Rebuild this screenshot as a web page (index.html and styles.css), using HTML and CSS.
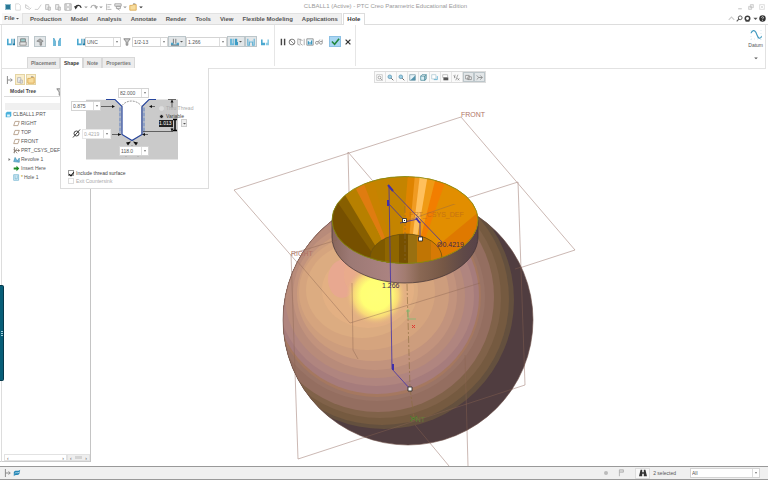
FILE: index.html
```html
<!DOCTYPE html>
<html lang="en">
<head>
<meta charset="utf-8">
<title>CLBALL1 (Active) - PTC Creo Parametric Educational Edition</title>
<link rel="stylesheet" href="styles.css">
</head>
<body>
<svg class="defs" aria-hidden="true">
  <symbol id="i-page" viewBox="0 0 10 10"><path d="M2 1h4l2 2v6H2z" fill="#fff" stroke="#d4d4d4"/></symbol>
  <symbol id="i-open" viewBox="0 0 10 10"><path d="M2 2l5 4M2 2v4l5 2 2-2" fill="none" stroke="#c0c0c0"/></symbol>
  <symbol id="i-pen" viewBox="0 0 10 10"><path d="M1 8h4l4-6" fill="none" stroke="#c4c4c4"/></symbol>
  <symbol id="i-copy" viewBox="0 0 10 10"><path d="M2 2h4v6H2zM5 5h3v4H5z" fill="#eee" stroke="#b4b4b4"/></symbol>
  <symbol id="i-disk" viewBox="0 0 10 10"><path d="M1 1h8v8H1z" fill="#ddd" stroke="#aaa"/><path d="M3 1h4v3H3zM3 6h4v3H3z" fill="#fff" stroke="#aaa" stroke-width=".6"/></symbol>
  <symbol id="i-undo" viewBox="0 0 10 10"><path d="M2 5c1-3 6-3 7 1" fill="none" stroke="currentColor" stroke-width="1.6"/><path d="M0 4l5 0-3 4z" fill="currentColor"/></symbol>
  <symbol id="i-redo" viewBox="0 0 10 10"><path d="M8 5c-1-3-6-3-7 1" fill="none" stroke="#aaa" stroke-width="1.4"/><path d="M10 4H5l3 4z" fill="#aaa"/></symbol>
  <symbol id="i-regen" viewBox="0 0 10 10"><path d="M3 2h5M3 8h5M3 5h3M2 1v8" fill="none" stroke="#aaa"/></symbol>
  <symbol id="i-win" viewBox="0 0 10 10"><path d="M1 1h8v3H1zM3 4h5v3H3zM4 7l3 2" fill="#eee" stroke="#999"/></symbol>
  <symbol id="i-folder" viewBox="0 0 10 10"><path d="M1 3h3l1-1h4v7H1z" fill="#f7dc9c" stroke="#d9a548"/><path d="M5 1h3" stroke="#888"/></symbol>
  <symbol id="i-u" viewBox="0 0 10 10"><path d="M0 1h2v6h3V1h1v8H0z" fill="#4ba8d0"/><path d="M7 1h1v6h1V1h1v8H7z" fill="#1e7aa4"/></symbol>
  <symbol id="i-u2" viewBox="0 0 10 10"><path d="M0 1h3v6h1V1h1v8H0z" fill="#6bb8da"/><path d="M6 1h3v4h1v4H6z" fill="#3d9bc4"/></symbol>
  <symbol id="i-stack" viewBox="0 0 10 10"><path d="M2 1h6v4H2z" fill="#9cc" stroke="#777"/><path d="M1 5h8v4H1z" fill="#e4e4e4" stroke="#888"/></symbol>
  <symbol id="i-bolt" viewBox="0 0 10 10"><path d="M1 4l4-3 4 3-2 1v4H5V5z" fill="#aaa" stroke="#777" stroke-width=".8"/></symbol>
  <symbol id="i-v" viewBox="0 0 10 10"><path d="M0 0h1l2 4v6H0z" fill="#74bddd"/><path d="M10 0H9L7 4v6h3z" fill="#74bddd"/><path d="M1 0l2 4v6M9 0L7 4v6" fill="none" stroke="#3a92ba" stroke-width=".8"/></symbol>
  <symbol id="i-filter" viewBox="0 0 10 10"><path d="M1 1h8L6 5v4H4V5z" fill="#ccc" stroke="#777"/></symbol>
  <symbol id="i-depth" viewBox="0 0 10 10"><path d="M0 6h3v2h4V6h3v3H0z" fill="#4ba8d0"/><path d="M3 1v6M6 1v6M0 9h10" stroke="#666"/></symbol>
  <symbol id="i-sink" viewBox="0 0 10 10"><path d="M1 1v8h2V5h4v4h2V1" fill="none" stroke="#62b1d4" stroke-width="1.4"/><path d="M3 3l2 2 2-2" fill="none" stroke="#a4d3e8"/></symbol>
  <symbol id="i-bore" viewBox="0 0 10 10"><path d="M0 2h2v4h3v3H0z" fill="#4ba8d0"/><path d="M10 2H8v4H6v3h4z" fill="#8dcbe4"/></symbol>
  <symbol id="i-pause" viewBox="0 0 10 10"><path d="M3 1v8M7 1v8" stroke="#444" stroke-width="1.8"/></symbol>
  <symbol id="i-no" viewBox="0 0 10 10"><circle cx="5" cy="5" r="3.6" fill="none" stroke="#777" stroke-width="1.2"/><path d="M2.5 2.5l5 5" stroke="#777"/></symbol>
  <symbol id="i-layers" viewBox="0 0 10 10"><path d="M1 1v7l3 1M4 1v6l3 2M9 1v8M1 1l6 2" fill="none" stroke="#999"/></symbol>
  <symbol id="i-prev" viewBox="0 0 10 10"><path d="M1 1h8v8H1z" fill="#e5f3f9" stroke="#888"/><path d="M3 4v4M5 5v3M7 3v5" stroke="#3695be" stroke-width="1.4"/></symbol>
  <symbol id="i-glasses" viewBox="0 0 10 10"><circle cx="2.4" cy="6" r="1.8" fill="none" stroke="#888"/><circle cx="7.4" cy="6" r="1.8" fill="none" stroke="#888"/><path d="M4 5l2-3M9 5V2" stroke="#888"/></symbol>
  <symbol id="i-check" viewBox="0 0 10 10"><path d="M1 5l3 3 5-6" fill="none" stroke="#23873e" stroke-width="1.8"/></symbol>
  <symbol id="i-x" viewBox="0 0 10 10"><path d="M2 2l6 6M8 2L2 8" stroke="#333" stroke-width="1.6"/></symbol>
  <symbol id="i-caret" viewBox="0 0 10 10"><path d="M2 4h6L5 7z" fill="currentColor"/></symbol>
  <symbol id="i-zoom" viewBox="0 0 10 10"><circle cx="6" cy="4" r="2.7" fill="none" stroke="currentColor" stroke-width="1.4"/><path d="M4 6L1 9" stroke="currentColor" stroke-width="1.6"/></symbol>
  <symbol id="i-mag" viewBox="0 0 10 10"><circle cx="4" cy="4" r="2.6" fill="#9fd0e6" stroke="#528eab"/><path d="M6 6l3 3" stroke="#666" stroke-width="1.4"/></symbol>
  <symbol id="i-gear" viewBox="0 0 10 10"><circle cx="5" cy="5" r="3.2" fill="none" stroke="#3c3c3c" stroke-width="2.2"/><path d="M2 9h6" stroke="#555"/></symbol>
  <symbol id="i-help" viewBox="0 0 10 10"><circle cx="5" cy="5" r="4.6" fill="#333"/><path d="M3.6 3.8c0-2 3-1.8 2.8 0C6.2 5 5 4.8 5 6M5 7v1.2" fill="none" stroke="#fff"/></symbol>
  <symbol id="i-fit" viewBox="0 0 10 10"><path d="M1 1h8v8H1z" fill="#fff" stroke="#bbb"/><circle cx="5" cy="5" r="2" fill="none" stroke="#888"/><path d="M6 6l3 3" stroke="#888"/></symbol>
  <symbol id="i-repaint" viewBox="0 0 10 10"><path d="M1 1h8v8H1z" fill="#e6f3f8" stroke="#7797a5"/><path d="M9 2v7H2z" fill="#5393ad"/></symbol>
  <symbol id="i-cube" viewBox="0 0 10 10"><path d="M1 3h6v6H1z" fill="#dceff5" stroke="#397f92"/><path d="M1 3l2-2h6v6L7 9V3l2-2" fill="none" stroke="#397f92"/></symbol>
  <symbol id="i-views" viewBox="0 0 10 10"><path d="M1 1h6v6H1z" fill="#fff" stroke="#a8c4d0"/><path d="M4 8h5V3" fill="none" stroke="#3fa0c8"/></symbol>
  <symbol id="i-cam" viewBox="0 0 10 10"><path d="M1 1h7v4H1z" fill="#fff" stroke="#aaa"/><path d="M2 5h7v4H2z" fill="#555"/></symbol>
  <symbol id="i-axes" viewBox="0 0 10 10"><path d="M1 2l2 3M7 1L4 9M6 6l3 3M9 6L7 9M3 1L2 6" stroke="#777" stroke-width=".9"/></symbol>
  <symbol id="i-note" viewBox="0 0 10 10"><path d="M1 2h5v5H1zM4 4h5v4H4z" fill="#fff" stroke="#777"/></symbol>
  <symbol id="i-spin" viewBox="0 0 10 10"><path d="M1 2l3 3-3 3M4 5h5M6 2l3 3-3 3" fill="none" stroke="#777"/></symbol>
  <symbol id="i-tree" viewBox="0 0 10 10"><path d="M3 0v10M3 5h6M7 3l2 2-2 2" fill="none" stroke="#888" stroke-width="1.2"/></symbol>
  <symbol id="i-part" viewBox="0 0 10 10"><path d="M1 3l2-2h6v6L7 9H1z" fill="#4cb2dc"/><path d="M3 5h4v3H3z" fill="#e4f5fb"/></symbol>
  <symbol id="i-plane" viewBox="0 0 10 10"><path d="M1 8l2-6h6L7 8z" fill="none" stroke="#a08468"/></symbol>
  <symbol id="i-csys" viewBox="0 0 10 10"><path d="M2 0v9M1 3l5 6M6 2L1 8M4 5h6M8 3v4" fill="none" stroke="#77685c"/></symbol>
  <symbol id="i-revolve" viewBox="0 0 10 10"><path d="M1 8l2-6 3 5 3-4v6z" fill="#6bb8da" stroke="#327fa4" stroke-width=".8"/></symbol>
  <symbol id="i-insert" viewBox="0 0 10 10"><path d="M1 3.5h4V1l4 4-4 4V6.5H1z" fill="#1c8a25"/></symbol>
  <symbol id="i-hole" viewBox="0 0 10 10"><path d="M1 1h7v8H1z" fill="#e6f4fa" stroke="#67afcd"/><path d="M3 2v5h3V2" fill="none" stroke="#67afcd"/></symbol>
  <symbol id="i-globe" viewBox="0 0 10 10"><path d="M1 4c2-4 5 0 8-3l-1 5c-2 3-5 0-7 3z" fill="#2686b5"/><path d="M2 6c2-3 3 0 6-2" fill="none" stroke="#bfe4f3"/></symbol>
  <symbol id="i-find" viewBox="0 0 10 10"><path d="M2 1h2v3h2V1h2l2 8H6V6H4v3H0z" fill="#333"/></symbol>
  <symbol id="i-flag" viewBox="0 0 10 10"><path d="M3 9V1h5v3H3" fill="#ddd" stroke="#aaa"/></symbol>
  <symbol id="i-curve" viewBox="0 0 12 12"><path d="M1 4C4-1 6 3 7 6s3 5 5 1" fill="none" stroke="#3d97bd" stroke-width="1.1"/><path d="M1 10h10M1 1v10M11 1v10" stroke="#b9dcea" stroke-width=".6" stroke-dasharray="1 2"/></symbol>
</svg>

<header class="titlebar">
  <nav class="quick" aria-label="Quick access">
    <span class="app-mark"></span>
    <button aria-label="New"><svg><use href="#i-page"/></svg></button>
    <button aria-label="Open"><svg><use href="#i-open"/></svg></button>
    <button aria-label="Edit"><svg><use href="#i-pen"/></svg></button>
    <button aria-label="Copy"><svg><use href="#i-copy"/></svg></button>
    <button aria-label="Paste"><svg><use href="#i-copy"/></svg></button>
    <button aria-label="Save"><svg><use href="#i-disk"/></svg></button>
    <button class="dark" aria-label="Undo"><svg><use href="#i-undo"/></svg></button>
    <button class="thin" aria-label="Undo list"><svg><use href="#i-caret"/></svg></button>
    <button class="slim" aria-label="Redo"><svg><use href="#i-redo"/></svg></button>
    <button class="thin" aria-label="Redo list"><svg><use href="#i-caret"/></svg></button>
    <button class="slim" aria-label="Regenerate"><svg><use href="#i-regen"/></svg></button>
    <button class="slim" aria-label="Windows"><svg><use href="#i-win"/></svg></button>
    <button class="thin" aria-label="Window list"><svg><use href="#i-caret"/></svg></button>
    <button aria-label="Close window"><svg><use href="#i-folder"/></svg></button>
    <button class="thin dark" aria-label="Customize"><svg><use href="#i-caret"/></svg></button>
  </nav>
  <h1>CLBALL1 (Active) - PTC Creo Parametric Educational Edition</h1>
  <div class="window-buttons">
    <button aria-label="Minimize"><svg viewBox="0 0 10 10"><path d="M2 8h6" stroke="#bbb" stroke-width="1.5"/></svg></button>
    <button aria-label="Restore"><svg viewBox="0 0 10 10"><path d="M1 4h5v5H1zM4 1h5v5H4z" fill="#eee" stroke="#bbb"/></svg></button>
    <button aria-label="Close"><svg viewBox="0 0 10 10"><path d="M1 1h8v8H1zM3 3l4 4M7 3L3 7" fill="none" stroke="#ccc"/></svg></button>
  </div>
</header>

<nav class="tabs">
  <button class="file">File<svg><use href="#i-caret"/></svg></button>
  <div class="tab-list">
    <button>Production</button><button>Model</button><button>Analysis</button><button>Annotate</button><button>Render</button><button>Tools</button><button>View</button><button>Flexible Modeling</button><button>Applications</button>
  </div>
  <button class="active">Hole</button>
  <div class="help-buttons">
    <button aria-label="Collapse"><svg viewBox="0 0 10 10"><path d="M1 7l4-4 4 4" fill="none" stroke="#ccc" stroke-width="1.5"/></svg></button>
    <button aria-label="Search"><svg><use href="#i-zoom"/></svg></button>
    <button aria-label="Settings"><svg><use href="#i-gear"/></svg></button>
    <button class="thin" aria-label="Settings list"><svg><use href="#i-caret"/></svg></button>
    <button aria-label="Help"><svg><use href="#i-help"/></svg></button>
  </div>
</nav>

<section class="ribbon">
  <div class="dashboard">
    <div class="tools">
      <button aria-label="Simple hole"><svg><use href="#i-u"/></svg></button>
      <button class="on" aria-label="Standard hole"><svg><use href="#i-stack"/></svg></button>
      <button class="on spaced" aria-label="Tapping"><svg><use href="#i-bolt"/></svg></button>
      <button class="spaced" aria-label="Tapered"><svg><use href="#i-v"/></svg></button>
      <span class="series"><svg><use href="#i-u"/></svg></span>
      <span class="combo w-m"><select aria-label="Thread series"><option>UNC</option></select></span>
      <span class="lead"><svg><use href="#i-filter"/></svg></span>
      <span class="combo w-m"><select aria-label="Screw size"><option>1/2-13</option></select></span>
      <button class="on split" aria-label="Depth type"><svg><use href="#i-depth"/></svg><svg class="arrow"><use href="#i-caret"/></svg></button>
      <span class="combo w-l"><select aria-label="Depth"><option>1.266</option></select></span>
      <button class="on split" aria-label="Depth side"><svg><use href="#i-u2"/></svg><svg class="arrow"><use href="#i-caret"/></svg></button>
      <button class="on" aria-label="Countersink"><svg><use href="#i-sink"/></svg></button>
      <button class="last" aria-label="Counterbore"><svg><use href="#i-bore"/></svg></button>
    </div>
    <div class="confirm">
      <button aria-label="Pause"><svg><use href="#i-pause"/></svg></button>
      <button aria-label="No preview"><svg><use href="#i-no"/></svg></button>
      <button aria-label="Unattached"><svg><use href="#i-layers"/></svg></button>
      <button aria-label="Attached"><svg><use href="#i-prev"/></svg></button>
      <button aria-label="Verify"><svg><use href="#i-glasses"/></svg></button>
      <button class="accept" aria-label="Accept"><svg><use href="#i-check"/></svg></button>
      <button aria-label="Cancel"><svg><use href="#i-x"/></svg></button>
    </div>
    <button class="datum"><svg><use href="#i-curve"/></svg>Datum<svg class="arrow"><use href="#i-caret"/></svg></button>
  </div>
  <div class="subtabs">
    <button>Placement</button><button class="active">Shape</button><button>Note</button><button>Properties</button>
  </div>
</section>

<main>
  <aside class="tree-panel">
    <div class="tree-tabs">
      <button aria-label="Model tree"><svg><use href="#i-tree"/></svg></button>
      <button class="tan" aria-label="Folders"><svg><use href="#i-copy"/></svg></button>
      <button class="tan" aria-label="Favorites"><svg><use href="#i-folder"/></svg></button>
    </div>
    <h2>Model Tree<svg><use href="#i-filter"/></svg></h2>
    <div class="tree-head"></div>
    <ul class="tree">
      <li class="root"><svg><use href="#i-part"/></svg>CLBALL1.PRT</li>
      <li><svg><use href="#i-plane"/></svg>RIGHT</li>
      <li><svg><use href="#i-plane"/></svg>TOP</li>
      <li><svg><use href="#i-plane"/></svg>FRONT</li>
      <li><svg><use href="#i-csys"/></svg>PRT_CSYS_DEF</li>
      <li class="parent"><svg class="twist" viewBox="0 0 10 10"><path d="M3 2l4 3-4 3z" fill="#777"/></svg><svg><use href="#i-revolve"/></svg>Revolve 1</li>
      <li><svg><use href="#i-insert"/></svg>Insert Here</li>
      <li><svg><use href="#i-hole"/></svg><span class="star">*</span>Hole 1</li>
    </ul>
    <div class="scrolls">
      <div class="scroll"><span>‹</span><span>›</span></div>
      <div class="scroll short"><span>‹</span><i></i><span>›</span></div>
    </div>
    <button class="drawer" aria-label="Open drawer"><span></span></button>
  </aside>

  <section class="canvas">
    <div class="view-tools">
      <button aria-label="Refit"><svg><use href="#i-fit"/></svg></button>
      <button aria-label="Zoom in"><svg><use href="#i-mag"/></svg></button>
      <button aria-label="Zoom out"><svg><use href="#i-mag"/></svg></button>
      <button aria-label="Repaint"><svg><use href="#i-repaint"/></svg></button>
      <button aria-label="Display style"><svg><use href="#i-cube"/></svg></button>
      <button aria-label="Saved views"><svg><use href="#i-views"/></svg></button>
      <button aria-label="View manager"><svg><use href="#i-cam"/></svg></button>
      <button aria-label="Datum display"><svg><use href="#i-axes"/></svg></button>
      <button class="on" aria-label="Annotations"><svg><use href="#i-note"/></svg></button>
      <button class="on" aria-label="Spin center"><svg><use href="#i-spin"/></svg></button>
    </div>
    <svg class="model" viewBox="91 69 677 397" preserveAspectRatio="xMidYMid meet">
      <defs>
        <clipPath id="ball"><circle cx="408" cy="320" r="125"/></clipPath>
        <clipPath id="rim"><ellipse cx="405" cy="220" rx="73" ry="43.5"/></clipPath>
        <clipPath id="bore"><ellipse cx="406" cy="258" rx="36" ry="24"/></clipPath>
        <radialGradient id="glow"><stop offset="0" stop-color="#ffff78"/><stop offset=".5" stop-color="#ffff74"/><stop offset=".75" stop-color="#f8d878"/><stop offset="1" stop-color="#e4b483" stop-opacity="0"/></radialGradient>
        <linearGradient id="wall"><stop offset="0" stop-color="#88665c"/><stop offset=".12" stop-color="#9c7974"/><stop offset=".42" stop-color="#ac8482"/><stop offset=".5" stop-color="#a27c70"/><stop offset=".6" stop-color="#8a6854"/><stop offset=".76" stop-color="#765846"/><stop offset=".9" stop-color="#5f4947"/><stop offset="1" stop-color="#584248"/></linearGradient>
      </defs>
      <g class="plane">
        <path d="M350 323L234 190 461 117 575 250 350 323"/>
        <path d="M291 254L518 182 525 385 298 459z"/>
        <path d="M348 152L353 350M348 152L378 187M415 425L449 466M465 355L468 466"/>
      </g>
      <g clip-path="url(#ball)">
        <circle cx="408" cy="320" r="126" fill="#503d40"/>
        <ellipse cx="384" cy="300" rx="130" ry="129" fill="#64503e"/>
        <ellipse cx="382" cy="299" rx="127" ry="126" fill="#755a40"/>
        <ellipse cx="380" cy="298" rx="121" ry="120" fill="#806249"/>
        <ellipse cx="378" cy="297" rx="116" ry="115" fill="#946e60"/>
        <ellipse cx="377" cy="297" rx="108" ry="104" fill="#9a7466"/>
        <ellipse cx="377" cy="296" rx="104" ry="101" fill="#a57860"/>
        <ellipse cx="377" cy="296" rx="102" ry="98" fill="#a67c7c"/>
        <ellipse cx="376" cy="296" rx="98" ry="90" fill="#b0857f"/>
        <ellipse cx="375" cy="296" rx="90" ry="82" fill="#b88b7a"/>
        <ellipse cx="375" cy="295" rx="82" ry="75" fill="#c2937d"/>
        <ellipse cx="373" cy="294" rx="76" ry="67" fill="#cd9d7d"/>
        <ellipse cx="367" cy="292" rx="68" ry="58" fill="#d5a47e"/>
        <ellipse cx="362" cy="290" rx="56" ry="48" fill="#dcac81"/>
        <ellipse cx="368" cy="290" rx="46" ry="38" fill="#e3b083"/>
        <ellipse cx="342" cy="279" rx="14" ry="19" fill="#e9a694" opacity=".75"/>
        <ellipse cx="355" cy="275" rx="11" ry="17" fill="#e9ac8a" opacity=".7"/>
        <circle cx="376" cy="295" r="30" fill="url(#glow)"/>
      </g>
      <circle cx="408" cy="320" r="125" fill="none" stroke="#6f5148" stroke-width=".6"/>
      <path d="M332 220v17c0 25 33 46 73 46s73-21 73-46v-17z" fill="url(#wall)" stroke="#3f3034" stroke-width=".7"/>
      <g clip-path="url(#rim)">
        <path d="M330 175h150v90H330z" fill="#d89000"/>
        <path d="M330 270v-60l10-9 68 69z" fill="#765000"/>
        <path d="M338 203l8-9 54 76h-16z" fill="#875f00"/>
        <path d="M345 195l13-8 36 80h-6z" fill="#b78000"/>
        <path d="M356 189l11-7 23 55-5 8z" fill="#df7c10"/>
        <path d="M364 184l10-6 18 60h-7z" fill="#c88200"/>
        <path d="M373 179l36-5v70h-18z" fill="#c48400"/>
        <path d="M408 174h8l-5 70h-9z" fill="#df8400"/>
        <path d="M415 174h6l-7 66h-5z" fill="#f09b22"/>
        <path d="M420 174h10l-12 68h-6z" fill="#ffc05c"/>
        <path d="M428 174l10 3-16 62-5-1z" fill="#ef9a14"/>
        <path d="M436 177l12 4-20 64-8-5z" fill="#f27e00"/>
        <path d="M446 180l35 22v44l-45 14-12-18z" fill="#e28e00"/>
        <path d="M481 210v40l-50 16 4-18z" fill="#df7900"/>
        <g clip-path="url(#bore)">
          <path d="M368 230h80v40h-80z" fill="#7f5a00"/>
          <path d="M385 230h16v40h-16z" fill="#8f6600"/><path d="M399 230h9v40h-9z" fill="#765000"/>
          <path d="M408 230h9v40h-9z" fill="#9a7010"/><path d="M417 230h14v40h-14z" fill="#c07504"/><path d="M431 230h12v40h-12z" fill="#d67a05"/>
        </g>
        <ellipse cx="406" cy="258" rx="36" ry="24" fill="none" stroke="#6a5010" stroke-width=".7"/>
      </g>
      <ellipse cx="405" cy="220" rx="73" ry="43.5" fill="none" stroke="#7c8a18" stroke-width=".8"/>
      <g class="plane over" clip-path="url(#ball)">
        <path d="M350 323L291 254 337 240M350 323L480 283M515 269l60-19M400 223L518 182 525 385 298 459 291 254M352 283l1 67 5 9M465 355l3 111M415 425l34 41"/>
      </g>
      <path d="M405 206v54M407 284l3 104 4 30" class="axis"/>
      <g class="dimension">
        <path d="M389 187l3 182 18 20M389 187l53 55M388 203l16 17M420 222v17M400 223l18-4"/>
        <path d="M388 185l5 6M388 200v6M416 218l4 5M393 364v6" stroke-width="2"/>
      </g>
      <g fill="#fff" stroke="#222" stroke-width=".8"><path d="M402.5 218.500h4v4h-4zM418.500 237h4v4h-4zM408 387h4v4h-4z"/></g>
      <path d="M404 220h1v1h-1z" fill="#222"/>
      <path d="M408 309v10h8M406 311h4" fill="none" stroke="#70c070" stroke-width=".7"/>
      <path d="M412 325l3 3m0-3l-3 3" fill="none" stroke="#e03830"/>
      <path d="M410 416l7 5m0-5l-7 5" fill="none" stroke="#3a8428" stroke-width=".7"/>
      <g class="labels">
        <text x="461" y="117">FRONT</text>
        <text x="291" y="256">RIGHT</text>
        <text x="409" y="217" class="faint">PRT_CSYS_DEF</text>
        <text x="411" y="422" class="green">PNT</text>
        <text x="437" y="247" class="value">Ø0.4219</text>
        <text x="382" y="288" class="value">1.266</text>
      </g>
    </svg>
  </section>

  <form class="shape-panel">
    <div class="diagram">
      <svg viewBox="60 69 149 97">
        <path d="M86 100h92v60H86z" fill="#cacaca"/>
        <path d="M108 100h6l8 8v27l9.500 5.500 9.500-5.500v-27l8-8z" fill="#fff"/>
        <path d="M86 99h63v1H86z" fill="#fff"/>
        <path d="M106 100h9l7 7v28l10 6 10-6v-28l7-7h7" fill="none" stroke="#27459c" stroke-width="1.2"/>
        <path d="M120 108v26M144 108v26" stroke="#577bc0" stroke-dasharray="4 1"/>
        <path d="M122 106c5-6 14-6 19 0M126 157l6-11 6 11" fill="none" stroke="#555" stroke-width=".6" stroke-dasharray="2 1"/>
        <path d="M101 107h12M150 107h5M112 135h9M143 135h5M143 132h30M172 101v7M172 128v4M168 100h8" stroke="#333" stroke-width=".7"/>
        <path d="M115 107l-3-1.500v3zM149 107l3-1.500v3zM121 135l-3-1.500v3zM142 135l3-1.500v3zM172 100l-1.500 3h3zM172 132l-1.500-3h3zM126 143l5-1-3 4zM138 143l-5-1 3 4z" fill="#111"/>
        <path d="M73 138l7-8" stroke="#444"/><circle cx="76.500" cy="134" r="2.500" fill="none" stroke="#444"/>
        <path d="M173 120h4M175 120v11M173 131h4" stroke="#000" stroke-width="1.500"/>
      </svg>
      <span class="combo at-angle"><select aria-label="Countersink angle"><option>82.000</option></select></span>
      <span class="combo at-sink"><select aria-label="Countersink diameter"><option>0.875</option></select></span>
      <span class="combo at-drill"><select aria-label="Drill diameter" disabled><option>0.4219</option></select></span>
      <span class="combo at-tip"><select aria-label="Tip angle"><option>118.0</option></select></span>
      <div class="thread">
        <label class="off"><input type="radio" name="thread" disabled>Thru Thread</label>
        <label><input type="radio" name="thread" checked>Variable</label>
      </div>
      <input class="depth" aria-label="Thread depth" value="1.013">
      <button type="button" class="depth-list" aria-label="Thread depth list"><svg><use href="#i-caret"/></svg></button>
    </div>
    <div class="options">
      <label><input type="checkbox" checked>Include thread surface</label>
      <label class="off"><input type="checkbox" disabled>Exit Countersink</label>
    </div>
  </form>
</main>

<footer>
  <button aria-label="Toggle tree"><svg><use href="#i-tree"/></svg></button>
  <button aria-label="Browser"><svg><use href="#i-globe"/></svg></button>
  <div class="state">
    <span class="dot"></span>
    <svg><use href="#i-flag"/></svg>
    <button class="find" aria-label="Find"><svg><use href="#i-find"/></svg></button>
    <span class="count">2 selected</span>
    <span class="combo"><select aria-label="Selection filter"><option>All</option></select></span>
  </div>
</footer>
</body>
</html>
```

FILE: styles.css
```css
* { box-sizing: border-box; }

body {
  margin: 0;
  height: 100vh;
  display: flex;
  flex-direction: column;
  overflow: hidden;
  background: #fff;
  color: #555;
  font: 5px/9px "Liberation Sans", Arial, sans-serif;
}

.defs { display: none; }

button, input, select { font: inherit; color: inherit; margin: 0; padding: 0; }

button {
  display: inline-flex;
  align-items: center;
  justify-content: center;
  flex: none;
  border: 0;
  background: none;
}

svg { width: 8px; height: 8px; flex: none; }

/* Title bar */
.titlebar {
  position: relative;
  display: flex;
  align-items: center;
  height: 13px;
  padding: 0 2px 0 5px;
}

.quick { display: flex; align-items: center; flex: 1; color: #999; }
.quick button { width: 10px; }
.quick .slim { width: 9px; }
.quick .thin { width: 6px; }
.quick .dark { color: #333; }
.thin svg { width: 6px; height: 6px; }

.app-mark {
  width: 6px;
  height: 6px;
  margin-right: 2px;
  background: #2a7896;
  border: 1px solid #8dbccc;
}

h1 {
  margin: 0;
  font-size: 6px;
  font-weight: normal;
  color: #999;
}

.window-buttons { display: flex; flex: 1; justify-content: flex-end; gap: 3px; }
.window-buttons svg { width: 6px; height: 6px; }
.window-buttons button { width: 8px; }

/* Ribbon tabs */
.tabs {
  display: flex;
  height: 12px;
  padding: 0 2px;
  border-bottom: 1px solid #ddd;
  font-size: 6px;
  font-weight: bold;
}

.tabs .file { width: 20px; background: #f7f7f7; }
.file svg { width: 5px; height: 5px; }

.tab-list {
  display: flex;
  gap: 9px;
  padding: 0 3px 0 7px;
  background: #f0f0f0;
  border: 1px solid #e2e2e2;
  border-bottom: 0;
}

.tabs .active {
  width: 22px;
  margin: 0 0 -1px 1px;
  background: #fff;
  border: 1px solid #ddd;
  border-bottom: 0;
  color: #333;
}

.help-buttons { display: flex; align-items: center; gap: 1px; margin-left: auto; }
.help-buttons .thin { width: 6px; }
.help-buttons svg { width: 7px; height: 7px; }

/* Dashboard */
.ribbon {
  height: 44px;
  margin: 0 2px 0 1px;
  display: flex;
  flex-direction: column;
  border: 1px solid #e2e2e2;
  border-top: 0;
}

.dashboard { display: flex; flex: 1; }

.tools, .confirm {
  display: flex;
  align-items: center;
  margin-bottom: -9px;
  padding: 0 3px 8px;
  border-right: 1px solid #e6e6e6;
}

.tools button { width: 12px; height: 11px; }
.tools .spaced { margin-left: 5px; }
.tools .on, .view-tools .on { background: #e2e6e8; border: 1px solid #bcc6ca; }
.tools .split { width: 18px; }
.tools .last { margin-left: 2px; }
.arrow { width: 5px; height: 5px; }
.series { display: flex; margin-left: 14px; }
.lead { display: flex; margin: 0 1px 0 2px; }

.confirm button { width: 9px; height: 11px; }
.confirm .accept { width: 12px; margin: 0 2px 0 6px; background: #a9d6f3; border: 1px solid #8cc0e4; }
.accept svg { width: 9px; height: 9px; }

.combo {
  position: relative;
  display: inline-flex;
  height: 10px;
  background: #fff;
  border: 1px solid #d4d4d4;
}

.combo::after {
  content: "";
  position: absolute;
  right: 2px;
  top: 3px;
  border: 1px solid transparent;
  border-top: 2px solid #777;
}

.combo select {
  width: 100%;
  appearance: none;
  border: 0;
  border-radius: 0;
  background: linear-gradient(#ddd, #ddd) right 6px top / 1px 100% no-repeat;
  line-height: 8px;
  padding: 0 6px 0 1px;
}

.combo select:disabled { color: #aaa; opacity: 1; }
.w-m { width: 36px; }
.w-l { width: 41px; }

.datum { flex-direction: column; justify-content: flex-start; margin: 4px 2px -9px auto; }
.datum svg { width: 12px; height: 12px; }
.datum .arrow { width: 6px; height: 6px; margin-top: 5px; }

.subtabs { display: flex; padding-left: 25px; width: max-content; font-weight: bold; }

.subtabs button {
  height: 11px;
  padding: 0 3px;
  background: #ececec;
  border: 1px solid #d8d8d8;
  border-bottom: 0;
  color: #777;
}

.subtabs .active { background: #fff; color: #333; }

/* Work area */
main { position: relative; display: flex; flex: 1; min-height: 0; }

.tree-panel {
  position: relative;
  display: flex;
  flex-direction: column;
  width: 91px;
  margin-bottom: 4px;
  border-right: 1px solid #c4c4c4;
}

.tree-panel::before {
  content: "";
  position: absolute;
  inset: 0 auto 0 1px;
  border-left: 1px solid #ddd;
}

.tree-tabs { display: flex; gap: 1px; padding: 5px 0 0 4px; }
.tree-tabs button { width: 10px; height: 11px; }
.tree-tabs .tan { background: #faeecb; border: 1px solid #e4d4a4; }

h2 {
  display: flex;
  align-items: center;
  gap: 20px;
  margin: 2px 4px 0;
  padding-left: 6px;
  border-bottom: 1px solid #ddd;
  font-size: 5px;
  line-height: 9px;
  color: #444;
}

.tree-head { height: 7px; margin: 6px 4px 0 5px; background: #f0f0f0; }
.tree { flex: 1; margin: 0; padding: 0 0 0 13px; list-style: none; }
.tree li { display: flex; align-items: center; gap: 1px; height: 9px; white-space: nowrap; }
.tree li svg { width: 7px; height: 7px; }
.tree .root { margin-left: -8px; }
.tree .parent { margin-left: -6px; }
.tree .parent .twist { width: 5px; height: 5px; }
.star { color: #b09000; }

.scrolls { display: flex; height: 8px; padding-left: 4px; border-bottom: 1px solid #ccc; }
.scroll { display: flex; justify-content: space-between; flex: 1; padding: 0 2px; border: 1px solid #e2e2e2; line-height: 6px; }
.scroll.short { flex: 0 0 23px; background: #eee; }
.scroll i { width: 7px; background: #d4d4d4; margin: 1px; }

.drawer {
  position: absolute;
  left: 0;
  top: 216px;
  width: 4px;
  height: 96px;
  background: #075e78;
  border: 1px solid #06394b;
  border-left: 0;
  border-radius: 0 2px 2px 0;
}

.drawer span { width: 2px; height: 5px; background: repeating-linear-gradient(#9fd0dd 0 1px, transparent 1px 2px); }

.canvas { display: grid; flex: 1; min-width: 0; min-height: 0; }
.canvas > * { grid-area: 1 / 1; }

.view-tools {
  display: flex;
  place-self: start center;
  z-index: 1;
  margin-top: 2px;
  background: #fafafa;
  border: 1px solid #ddd;
}

.view-tools button { width: 11px; height: 10px; border-right: 1px solid #e4e4e4; }
.view-tools svg { width: 7px; height: 7px; }

.model { width: 100%; height: 100%; min-height: 0; }
.plane { fill: none; stroke: #b59a92; stroke-width: .7; }
.over { stroke: #8c6452; opacity: .6; }
.axis { fill: none; stroke: #8a6b3c; stroke-width: .6; stroke-dasharray: 7 2 2 2; }
.dimension { fill: none; stroke: #4030a8; stroke-width: .8; }
.labels { font-size: 7px; fill: #b07466; }
.labels .faint { fill: #b8681c; opacity: .7; }
.labels .green { fill: #657f38; }
.labels .value { fill: #43284c; }

/* Shape panel */
.shape-panel {
  position: absolute;
  left: 60px;
  top: -1px;
  width: 149px;
  padding-bottom: 3px;
  background: #fff;
  border: 1px solid #ddd;
  border-top: 0;
}

.diagram { position: relative; margin: 0 -1px; }
.diagram > svg { display: block; width: 149px; height: 98px; }
.diagram .combo { position: absolute; }
.diagram .at-angle { left: 58px; top: 20px; width: 31px; }
.diagram .at-sink { left: 11px; top: 33px; width: 30px; }
.diagram .at-drill { left: 22px; top: 61px; width: 29px; border-color: #e8e8e8; }
.diagram .at-tip { left: 59px; top: 78px; width: 30px; }

.thread { position: absolute; left: 99px; top: 36px; display: grid; }
.thread label, .options label { display: flex; align-items: center; gap: 2px; height: 8px; color: #444; }
.thread .off, .options .off { color: #aaa; }

.thread input {
  appearance: none;
  width: 5px;
  height: 5px;
  border: 1px solid #ddd;
  border-radius: 50%;
  background: #ddd;
}

.thread input:checked { background: #222; border-color: #cacaca; }

.depth {
  position: absolute;
  left: 99px;
  top: 52px;
  width: 14px;
  height: 7px;
  border: 0;
  background: #222;
  color: #fff;
  line-height: 7px;
}

.depth-list { position: absolute; left: 121px; top: 51px; width: 6px; height: 8px; background: #eee; border: 1px solid #ccc; }
.depth-list svg { width: 5px; height: 5px; }

.options { padding: 3px 0 0 7px; }

.options input {
  appearance: none;
  display: grid;
  place-items: center;
  width: 6px;
  height: 6px;
  border: 1px solid #999;
}

.options input:checked::before {
  content: "";
  width: 2px;
  height: 4px;
  border: solid #111;
  border-width: 0 1px 1px 0;
  transform: rotate(40deg);
}

.options input:disabled { border-color: #ddd; }

/* Status bar */
footer {
  display: flex;
  align-items: center;
  gap: 2px;
  height: 14px;
  padding: 0 8px 0 3px;
  background: #f0f0f0;
  border-top: 1px solid #999;
  border-bottom: 1px solid #999;
}

.state { display: flex; align-items: center; margin-left: auto; }
.dot { width: 4px; height: 4px; margin-right: 9px; border-radius: 50%; background: #bbb; }
.find { width: 15px; height: 11px; margin: 0 3px 0 10px; background: #f8f8f8; border: 1px solid #ddd; }
.count { margin-right: 14px; }
.state .combo { width: 70px; }
```
